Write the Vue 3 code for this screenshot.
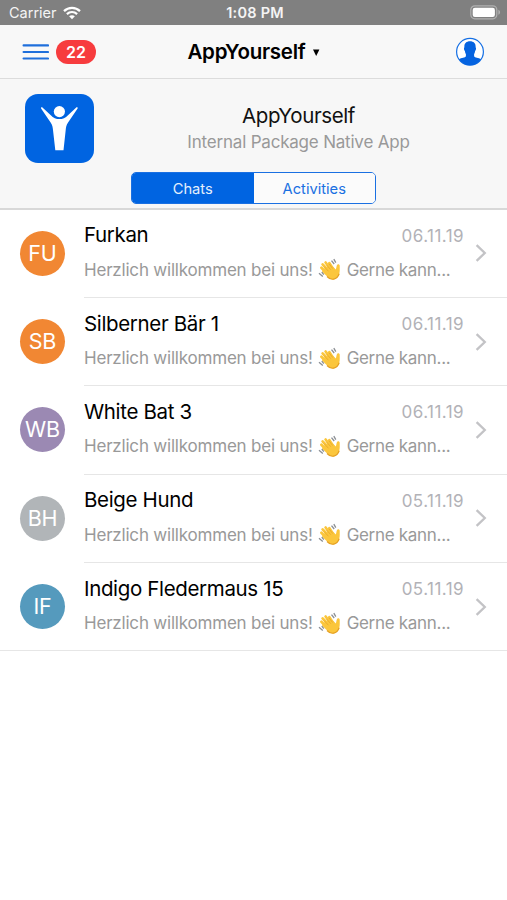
<template>
    <div class="screen">
        <div class="status-bar">
            <div class="carrier">
                <span>Carrier</span>
                <svg class="wifi" width="18" height="14" viewBox="0 0 18 14">
                    <path d="M1 5.1C5.5.7 12.5.7 17 5.1" />
                    <path d="M3.9 8.1C6.8 5.3 11.2 5.3 14.1 8.1" />
                    <path class="dot" d="M9 13.3L6.1 10.3C7.7 8.8 10.3 8.8 11.9 10.3Z" />
                </svg>
            </div>
            <span class="time">1:08 PM</span>
            <svg class="battery" width="31" height="15" viewBox="0 0 31 15">
                <rect x="0.8" y="0.8" width="26" height="13" rx="4" fill="none" stroke="#b0b0b0" stroke-width="1.2" />
                <rect x="2.7" y="2.7" width="22.2" height="9.2" rx="2.2" fill="#fff" />
                <path d="M28.4 4.8C30.6 5.8 30.6 8.8 28.4 9.8Z" fill="#b0b0b0" />
            </svg>
        </div>

        <header class="nav-bar">
            <div class="nav-left">
                <svg width="27" height="18" viewBox="0 0 27 18">
                    <path d="M1.6 2.4H26M1.6 9H26M1.6 15.5H26" stroke="#1f6fdb" stroke-width="2.2" stroke-linecap="round" />
                </svg>
                <span class="badge">22</span>
            </div>
            <h1 class="nav-title">
                <span>AppYourself</span>
                <svg width="7" height="8" viewBox="0 0 7 8"><path d="M0 1.4H6.4L3.2 8Z" fill="#000" /></svg>
            </h1>
            <svg class="profile" width="30" height="30" viewBox="0 0 30 30">
                <circle cx="15" cy="14.8" r="13.4" fill="#fff" stroke="#1670e4" stroke-width="1.2" />
                <path
                    d="M15 4.2C11.1 4.2 9.1 6.6 9.4 10.2C8.7 10.6 8.9 13.3 9.9 13.9C10.1 15.4 10.4 16.2 10.9 17V19.3C10.2 20.8 6.4 20.8 3.9 22.3A13.4 13.4 0 0 0 26.1 22.3C23.6 20.8 19.8 20.8 19.1 19.3V17C19.6 16.2 19.9 15.4 20.1 13.9C21.1 13.3 21.3 10.6 20.6 10.2C20.9 6.6 18.9 4.2 15 4.2Z"
                    fill="#0563e0"
                />
            </svg>
        </header>

        <section class="app-info">
            <svg class="app-logo" width="69" height="69" viewBox="0 0 69 69">
                <rect width="69" height="69" rx="13" fill="#0064e1" />
                <circle cx="34.4" cy="17.6" r="5.6" fill="#fff" />
                <path
                    d="M16.1 14.4C15.6 13.4 16.9 13 17.7 13.7L25.8 21.2C30.5 26.4 38.3 26.4 43 21.2L51 13.7C51.8 13 53.1 13.4 52.6 14.4L42.9 28.8C41.3 31.4 41 33.4 40.7 36L38.5 56.2H30.3L28 36C27.7 33.4 27.4 31.4 25.8 28.8Z"
                    fill="#fff"
                />
            </svg>
            <div class="app-text">
                <h2>AppYourself</h2>
                <p>Internal Package Native App</p>
            </div>
            <div class="segmented">
                <button
                    v-for="tab in tabs"
                    :key="tab"
                    :class="{ active: tab === activeTab }"
                    @click="activeTab = tab"
                >
                    {{ tab }}
                </button>
            </div>
        </section>

        <ul class="chat-list">
            <li v-for="chat in chats" :key="chat.name" class="chat">
                <div class="avatar" :class="chat.color">{{ chat.initials }}</div>
                <div class="chat-body">
                    <div class="chat-text">
                        <div class="chat-head">
                            <span class="name">{{ chat.name }}</span>
                            <span class="date">{{ chat.date }}</span>
                        </div>
                        <div class="message">
                            <span>Herzlich willkommen bei uns!</span>
                            <svg class="wave" width="23" height="23" viewBox="0 0 23 23">
                                <path d="M13.5 2.6L16.2 6M15.8 1.2L17.8 4.6M1 15.2L4.8 18.6M3.8 14L5.8 16.6" stroke="#8b8f94" stroke-width="1.3" />
                                <path
                                    d="M9 15.5L3.4 9.8M11 13L4.6 6.4M13 11.5L7.6 4.5M15 11L11.4 5.2"
                                    stroke="#fbc63c"
                                    stroke-width="2.7"
                                    stroke-linecap="round"
                                />
                                <path
                                    d="M4.8 11.2L13.2 6.7L17.8 11.4C18.5 9.8 18.4 8.6 18.9 7.2C19.4 5.7 21.7 6 21.7 7.7C21.7 10.5 22 12.8 21.3 15.5C20.4 19 17.8 21.5 14.8 21.5C11.8 21.5 9.8 19.3 8.1 17.6L4.1 13.4Z"
                                    fill="#fbc63c"
                                />
                                <path d="M6 8.5L10.5 13.3M8.4 6.8L12.8 11.7M11 5.7L14.6 10.5" stroke="#dd9a25" stroke-width="0.6" />
                                <path d="M9 18.5C13 22.8 18.8 22.2 21.2 15.8" fill="none" stroke="#e5a024" stroke-width="1.2" />
                            </svg>
                            <span class="rest">Gerne kann...</span>
                        </div>
                    </div>
                    <svg class="chevron" width="12" height="18" viewBox="0 0 12 18">
                        <path d="M1.6 1.2L9.8 9L1.6 16.8" fill="none" stroke="#c3c3c6" stroke-width="2.3" />
                    </svg>
                </div>
            </li>
        </ul>
    </div>
</template>

<script setup>
import { ref } from 'vue';

const tabs = ['Chats', 'Activities'];
const activeTab = ref('Chats');

const chats = [
    { initials: 'FU', name: 'Furkan', date: '06.11.19', color: 'orange' },
    { initials: 'SB', name: 'Silberner Bär 1', date: '06.11.19', color: 'orange' },
    { initials: 'WB', name: 'White Bat 3', date: '06.11.19', color: 'purple' },
    { initials: 'BH', name: 'Beige Hund', date: '05.11.19', color: 'gray' },
    { initials: 'IF', name: 'Indigo Fledermaus 15', date: '05.11.19', color: 'blue' }
];
</script>

<style>
body {
    margin: 0;
    background: #fff;
}
</style>

<style scoped>
.screen {
    width: 507px;
    height: 900px;
    overflow: hidden;
    background: #fff;
    font-family: Inter, "Liberation Sans", sans-serif;
    color: #111;
}

.status-bar {
    display: grid;
    grid-template-columns: 1fr auto 1fr;
    align-items: center;
    box-sizing: border-box;
    height: 25px;
    padding: 0 6px 0 9px;
    background: #808080;
    color: #f4f4f4;
    font-size: 14.5px;
}

.carrier {
    display: flex;
    align-items: center;
    gap: 6px;
}

.wifi path {
    fill: none;
    stroke: #fff;
    stroke-width: 2.2;
}

.wifi .dot {
    fill: #fff;
    stroke: none;
}

.time {
    font-weight: 600;
    font-size: 14.5px;
    letter-spacing: 0.25px;
}

.battery {
    justify-self: end;
}

.nav-bar {
    display: grid;
    grid-template-columns: 1fr auto 1fr;
    align-items: center;
    box-sizing: border-box;
    height: 54px;
    padding: 0 22px;
    background: #f8f8f8;
    border-bottom: 1px solid #dcdcdc;
}

.nav-left {
    display: flex;
    align-items: center;
    gap: 7px;
}

.badge {
    width: 40px;
    height: 24px;
    border-radius: 12px;
    background: #f73c3e;
    color: #fff;
    font-size: 16px;
    font-weight: 600;
    line-height: 24px;
    text-align: center;
}

.nav-title {
    display: flex;
    align-items: center;
    gap: 7px;
    margin: 0;
    color: #000;
    font-size: 20.5px;
    font-weight: 600;
    letter-spacing: -0.25px;
}

.profile {
    justify-self: end;
}

.app-info {
    display: grid;
    grid-template-columns: 69px 1fr;
    grid-template-rows: 69px 32px;
    row-gap: 9px;
    box-sizing: border-box;
    height: 130.6px;
    padding: 15px 4px 0 25px;
    background: #f7f7f7;
    border-bottom: 2px solid #d8d8d8;
}

.app-text {
    padding-top: 8px;
    text-align: center;
}

.app-text h2 {
    margin: 0;
    font-size: 20.5px;
    font-weight: 400;
    letter-spacing: -0.4px;
    line-height: 27px;
}

.app-text p {
    margin: 0;
    color: #999;
    font-size: 17px;
    letter-spacing: -0.2px;
    line-height: 26px;
}

.segmented {
    grid-column: 1 / 3;
    display: grid;
    grid-template-columns: 1fr 1fr;
    box-sizing: border-box;
    width: 245px;
    height: 32px;
    margin-left: 106px;
    border: 1px solid #1a70e2;
    border-radius: 5px;
    overflow: hidden;
}

.segmented button {
    padding: 2px 0 0;
    border: none;
    background: #fbfbfb;
    color: #1a70e2;
    font-family: inherit;
    font-size: 14.7px;
    cursor: pointer;
}

.segmented button.active {
    background: #0064e1;
    color: #e4effc;
}

.chat-list {
    margin: 0;
    padding: 0;
    list-style: none;
}

.chat {
    display: flex;
    align-items: center;
    box-sizing: border-box;
    height: 88.35px;
    padding-left: 20px;
}

.chat:last-child {
    border-bottom: 1px solid #e6e6e6;
}

.avatar {
    flex: none;
    width: 45px;
    height: 45px;
    margin: 0 19px 1px 0;
    border-radius: 50%;
    color: #fff;
    font-size: 21.5px;
    letter-spacing: -0.2px;
    line-height: 45px;
    text-align: center;
}

.avatar.orange {
    background: #f18733;
}

.avatar.purple {
    background: #9b89b3;
}

.avatar.gray {
    background: #b1b5b8;
}

.avatar.blue {
    background: #559abd;
}

.chat-body {
    display: flex;
    flex: 1;
    align-items: center;
    box-sizing: border-box;
    height: 100%;
    padding-right: 20px;
    border-bottom: 1px solid #e6e6e6;
}

.chat:last-child .chat-body {
    border-bottom: none;
}

.chat-text {
    width: 380px;
    padding-top: 1px;
    margin-right: 11px;
}

.chat-head {
    display: flex;
    align-items: center;
    justify-content: space-between;
    height: 32px;
}

.name {
    color: #000;
    font-size: 20.5px;
    letter-spacing: -0.35px;
}

.date {
    padding-top: 2px;
    color: #b2b2b7;
    font-size: 17px;
    letter-spacing: 0.45px;
}

.message {
    display: flex;
    align-items: center;
    height: 38px;
    color: #999;
    font-size: 17px;
    letter-spacing: -0.2px;
    white-space: nowrap;
}

.message .rest {
    letter-spacing: -0.3px;
}

.wave {
    margin: 0 6px 0 5px;
}
</style>
